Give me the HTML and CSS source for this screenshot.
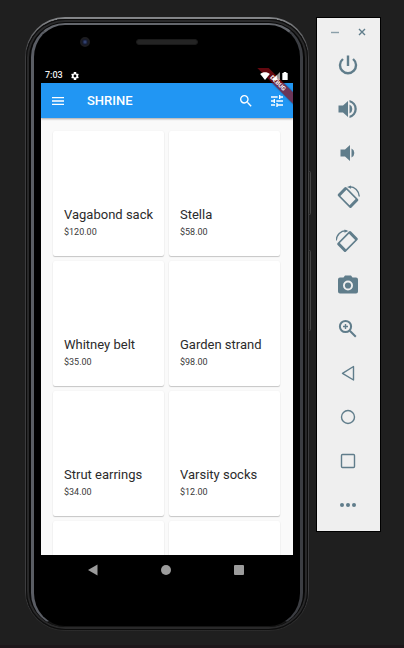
FILE: index.html
```html
<!DOCTYPE html>
<html lang="en">
<head>
<meta charset="utf-8">
<meta name="viewport" content="width=device-width, initial-scale=1">
<title>Shrine</title>
<link rel="stylesheet" href="styles.css">
</head>
<body>
<div class="stage">
  <div class="phone">
    <div class="phone-side">
      <div class="phone-face">
        <div class="bezel">
          <span class="lens"></span>
          <span class="speaker"></span>
        </div>
        <div class="screen">
          <div class="status">
            <span>7:03</span>
            <svg class="gear" viewBox="2 2 20 20"><path fill-rule="evenodd" d="M19.400 13a7.500 7.500 0 0 0 0-2l2.100-1.600-2-3.500-2.500 1a7.500 7.500 0 0 0-1.700-1L15 2H9l-.4 3.900a7.500 7.500 0 0 0-1.700 1l-2.500-1-2 3.500L4.600 11a7.500 7.500 0 0 0 0 2l-2.100 1.600 2 3.500 2.500-1a7.500 7.500 0 0 0 1.700 1L9 22h6l.4-3.900a7.500 7.500 0 0 0 1.700-1l2.500 1 2-3.500zM12 15.500a3.500 3.500 0 1 1 0-7 3.500 3.500 0 0 1 0 7z"/></svg>
            <span class="signals">
              <svg class="wifi" viewBox="0 0 24 20"><path d="M12 20L0 5C6-1 18-1 24 5z"/></svg>
              <svg class="cell" viewBox="0 0 20 20"><path class="dim" d="M20 0v20H0z"/><path d="M12 8v12H0z"/></svg>
              <svg class="battery" viewBox="0 0 12 18"><path d="M3 0h6v2h3v16H0V2h3z"/></svg>
            </span>
          </div>
          <header class="appbar">
            <button class="icon-button" aria-label="Menu"><svg viewBox="0 0 24 24"><path d="M3 18h18v-2H3v2zm0-5h18v-2H3v2zm0-7v2h18V6H3z"/></svg></button>
            <h1>SHRINE</h1>
            <button class="icon-button" aria-label="Search"><svg viewBox="0 0 24 24"><path d="M15.500 14h-.79l-.28-.27A6.470 6.470 0 0 0 16 9.500 6.500 6.500 0 1 0 9.500 16c1.610 0 3.090-.59 4.230-1.570l.27.28v.79l5 4.990L20.490 19l-4.990-5zm-6 0C7.010 14 5 11.990 5 9.500S7.010 5 9.500 5 14 7.010 14 9.500 11.990 14 9.500 14z"/></svg></button>
            <button class="icon-button" aria-label="Filter"><svg viewBox="0 0 24 24"><path d="M3 17v2h6v-2H3zM3 5v2h10V5H3zm10 16v-2h8v-2h-8v-2h-2v6h2zM7 9v2H3v2h4v2h2V9H7zm14 4v-2H11v2h10zm-6-4h2V7h4V5h-4V3h-2v6z"/></svg></button>
          </header>
          <main class="products">
            <article class="card"><h2>Vagabond sack</h2><p>$120.00</p></article>
            <article class="card"><h2>Stella</h2><p>$58.00</p></article>
            <article class="card"><h2>Whitney belt</h2><p>$35.00</p></article>
            <article class="card"><h2>Garden strand</h2><p>$98.00</p></article>
            <article class="card"><h2>Strut earrings</h2><p>$34.00</p></article>
            <article class="card"><h2>Varsity socks</h2><p>$12.00</p></article>
            <article class="card"></article>
            <article class="card"></article>
          </main>
          <nav class="navbar">
            <button aria-label="Back"><svg viewBox="0 0 12 12"><path d="M10.500 .5v11L1 6z"/></svg></button>
            <button aria-label="Home"><svg viewBox="0 0 12 12"><circle cx="6" cy="6" r="5"/></svg></button>
            <button aria-label="Overview"><svg viewBox="0 0 12 12"><rect x="1" y="1" width="10" height="10" rx="1"/></svg></button>
          </nav>
          <div class="ribbon">DEBUG</div>
        </div>
      </div>
    </div>
    <span class="key power-key"></span>
    <span class="key volume-key"></span>
  </div>

  <aside class="toolbar">
    <div class="window-buttons">
      <button aria-label="Minimize"><svg viewBox="0 0 10 10"><path class="line faint" d="M1 5.500h8"/></svg></button>
      <button aria-label="Close"><svg viewBox="0 0 10 10"><path class="line" d="M2 2l6 6M8 2L2 8"/></svg></button>
    </div>
    <button class="tool" aria-label="Power"><svg viewBox="0 0 24 24"><path d="M13.200 2.500h-2.400V13h2.400zM17.830 5.170l-1.600 1.600A6.800 6.800 0 1 1 7.770 6.770L6.170 5.170A9.200 9.200 0 1 0 17.830 5.170z"/></svg></button>
    <button class="tool" aria-label="Volume up"><svg viewBox="0 0 24 24"><path d="M2.500 8.500v7H7l5 4.500V4L7 8.500zM13.500 7.500v9a5 5 0 0 0 0-9zM13.500 3v2.300a7 7 0 0 1 0 13.400V21a9.200 9.200 0 0 0 0-18z"/></svg></button>
    <button class="tool" aria-label="Volume down"><svg viewBox="0 0 24 24"><path d="M4.500 8.500v7H9l5 4.500V4L9 8.500zM15.500 7.500v9a5 5 0 0 0 0-9z"/></svg></button>
    <button class="tool" aria-label="Rotate left"><svg viewBox="0 0 24 24"><g transform="rotate(45 12 12.500)"><path fill-rule="evenodd" d="M4 6.500h16a1.500 1.500 0 0 1 1.500 1.500v9a1.500 1.500 0 0 1-1.500 1.500H4A1.500 1.500 0 0 1 2.500 17V8A1.500 1.500 0 0 1 4 6.500zM5.500 8.200v8.600h13V8.200z"/></g><path d="M11 2l4-1.500v3.300z"/><path class="line" d="M13 1.800C19 1.500 23 6 23.300 11.500"/></svg></button>
    <button class="tool" aria-label="Rotate right"><svg viewBox="0 0 24 24"><g transform="matrix(-1 0 0 1 23.500 0)"><g transform="rotate(45 12 12.500)"><path fill-rule="evenodd" d="M4 6.500h16a1.500 1.500 0 0 1 1.500 1.500v9a1.500 1.500 0 0 1-1.500 1.500H4A1.500 1.500 0 0 1 2.500 17V8A1.500 1.500 0 0 1 4 6.500zM5.500 8.200v8.600h13V8.200z"/></g><path d="M11 2l4-1.500v3.300z"/><path class="line" d="M13 1.800C19 1.500 23 6 23.300 11.500"/></g></svg></button>
    <button class="tool" aria-label="Take screenshot"><svg viewBox="0 0 24 24"><path fill-rule="evenodd" d="M9 2.500L7.500 4.500H4a2 2 0 0 0-2 2v12a2 2 0 0 0 2 2h16a2 2 0 0 0 2-2v-12a2 2 0 0 0-2-2h-3.500L15 2.500zM12 7.500a5 5 0 1 1 0 10 5 5 0 0 1 0-10z"/><circle cx="12" cy="12.500" r="3.100"/></svg></button>
    <button class="tool" aria-label="Zoom"><svg viewBox="0 0 24 24"><circle class="line thick" cx="9.500" cy="9.500" r="5.600"/><path class="line thick" d="M13.800 13.800l6 6"/><path class="line" d="M9.500 7v5M7 9.500h5"/></svg></button>
    <button class="tool" aria-label="Back"><svg viewBox="0 0 24 24"><path class="line" d="M17.500 5.500v13.500L6.500 12.300z"/></svg></button>
    <button class="tool" aria-label="Home"><svg viewBox="0 0 24 24"><circle class="line" cx="12" cy="12" r="6.500"/></svg></button>
    <button class="tool" aria-label="Overview"><svg viewBox="0 0 24 24"><rect class="line" x="5.500" y="5.500" width="13" height="13" rx="1"/></svg></button>
    <button class="tool" aria-label="More"><svg viewBox="0 0 24 24"><circle cx="6" cy="12" r="2"/><circle cx="12" cy="12" r="2"/><circle cx="18" cy="12" r="2"/></svg></button>
  </aside>
</div>
</body>
</html>
```
FILE: styles.css
```css
* {
  box-sizing: border-box;
}

body {
  margin: 0;
  background: #1f1f1f;
  font-family: Roboto, "Liberation Sans", sans-serif;
}

h1,
h2,
p {
  margin: 0;
}

button {
  display: grid;
  place-items: center;
  margin: 0;
  padding: 0;
  border: 0;
  background: none;
}

svg {
  display: block;
}

.stage {
  display: flex;
  align-items: flex-start;
  gap: 7px;
  height: 100vh;
  padding: 17px 24px 14px 25px;
  border-bottom: 3px solid #1d171a;
}

/* Phone body: outer shell, metal side, glass face */
.phone {
  position: relative;
  flex: 1;
  align-self: stretch;
  min-width: 0;
  padding: 2px 1px 1px;
  border-radius: 40px;
  background: linear-gradient(#85878a, #3c3c3e 6%, #3c3c3e 94%, #2a2a2a);
}

.phone-side {
  height: 100%;
  padding: 4px 5px 3px;
  border-radius: 39px;
  background: #1a1a1b;
  box-shadow: inset 0 0 0 1px #0c0c0c, inset 0 0 0 3px #29292a, inset 0 0 0 5px #080808;
}

.phone-face {
  display: flex;
  flex-direction: column;
  height: 100%;
  padding: 0 7px 41px;
  border: solid;
  border-width: 2px 3px 1px;
  border-color: #63666c #3c3e43 #161616 #5a5d64;
  border-radius: 34px;
  background: #000;
}

.bezel {
  display: flex;
  align-items: center;
  gap: 46px;
  height: 34px;
  flex: none;
  padding-left: 39px;
}

.lens {
  width: 10px;
  height: 10px;
  border: 2px solid #1c1c20;
  border-radius: 50%;
  background: radial-gradient(#3c4f88, #151a2e 60%);
}

.speaker {
  width: 62px;
  height: 6px;
  border: 1px solid #1a1a1a;
  border-radius: 3px;
  background: #242424;
}

.key {
  position: absolute;
  right: -2px;
  width: 3px;
  border: 1px solid #444;
  border-radius: 2px;
  background: #222;
}

.power-key {
  top: 25%;
  height: 44px;
}

.volume-key {
  top: 38%;
  height: 81px;
}

.screen {
  position: relative;
  display: flex;
  flex: 1;
  flex-direction: column;
  min-height: 0;
  margin-top: 9px;
  overflow: hidden;
}

.status {
  z-index: 3;
  display: flex;
  flex: none;
  align-items: center;
  gap: 8px;
  height: 15px;
  padding: 0 5px 0 4px;
  color: #eee;
  font-size: 9px;
  font-weight: 500;
  line-height: 15px;
}

.status svg {
  height: 8px;
  fill: #fff;
}

.status .dim {
  opacity: .6;
}

.gear {
  width: 8px;
}

.signals {
  display: flex;
  gap: 2px;
  margin-left: auto;
}

.wifi {
  width: 10px;
}

.cell {
  width: 8px;
}

.battery {
  width: 6px;
}

.appbar {
  z-index: 1;
  display: flex;
  flex: none;
  align-items: center;
  gap: 15px;
  height: 35px;
  padding: 0 8px 0 9px;
  background: #2196f3;
  box-shadow: 0 1px 2px rgba(0, 0, 0, .35);
  color: #fff;
}

.appbar h1 {
  flex: 1;
  padding-left: 6px;
  font-size: 13px;
  font-weight: 500;
  line-height: 17px;
}

.icon-button svg {
  width: 16px;
  height: 16px;
  fill: #fff;
}

.products {
  display: grid;
  flex: 1;
  grid-template-columns: 1fr 1fr;
  grid-auto-rows: 125px;
  gap: 5px;
  min-height: 0;
  padding: 13px 13px 0 12px;
  overflow: hidden;
  background: #fafafa;
}

.card {
  display: flex;
  flex-direction: column;
  justify-content: flex-end;
  gap: 3px;
  padding: 0 0 18px 11px;
  border-radius: 2px;
  background: #fff;
  box-shadow: 0 1px 1px rgba(0, 0, 0, .2), 0 0 2px rgba(0, 0, 0, .06);
  white-space: nowrap;
}

.card h2 {
  color: #2b2b2b;
  font-size: 13px;
  font-weight: 400;
  line-height: 16px;
}

.card p {
  color: #3a3a3a;
  font-size: 9px;
  line-height: 12px;
}

.navbar {
  display: flex;
  flex: none;
  align-items: center;
  justify-content: space-between;
  height: 30px;
  padding: 0 48px 0 46px;
}

.navbar svg {
  width: 12px;
  height: 12px;
  fill: #9c9c9c;
}

.ribbon {
  position: absolute;
  top: 11px;
  right: -15px;
  width: 60px;
  height: 8px;
  background: rgba(140, 12, 22, .7);
  box-shadow: 0 0 2px rgba(0, 0, 0, .4);
  color: #fff;
  font-size: 6px;
  font-weight: 700;
  line-height: 8px;
  text-align: center;
  transform: rotate(45deg);
  z-index: 2;
}

/* Emulator control strip */
.toolbar {
  display: flex;
  flex: none;
  flex-direction: column;
  width: 65px;
  margin-right: -1px;
  padding: 0 1px 4px 0;
  border: 1px solid #000;
  background: #efefef;
}

.window-buttons {
  display: flex;
  justify-content: space-between;
  padding: 9px 12px 0 13px;
}

.window-buttons svg {
  width: 10px;
  height: 10px;
}

.tool {
  height: 44px;
}

.window-buttons + .tool {
  margin-top: 6px;
}

.tool svg {
  width: 24px;
  height: 24px;
}

.toolbar svg {
  fill: #607d8b;
}

.toolbar .line {
  fill: none;
  stroke: #607d8b;
  stroke-width: 1.400;
  stroke-linejoin: round;
}

.toolbar .thick {
  stroke-width: 2;
}

.toolbar .faint {
  opacity: .7;
}
```
